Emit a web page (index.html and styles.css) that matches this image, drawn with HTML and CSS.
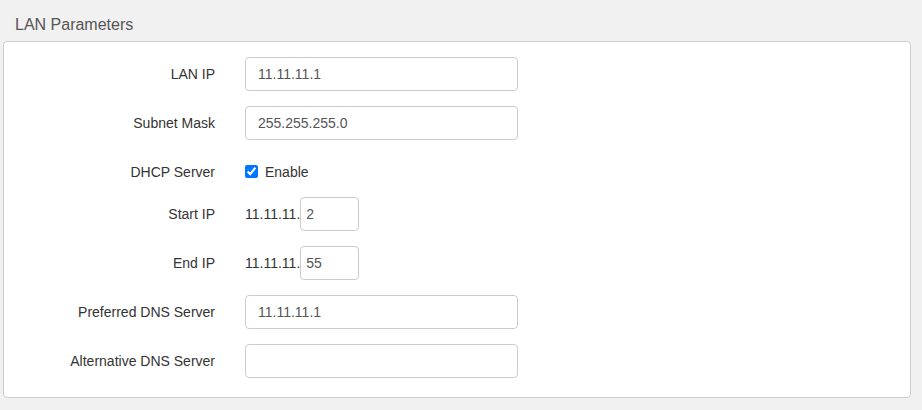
FILE: index.html
```html
<!DOCTYPE html>
<html lang="en">
<head>
    <meta charset="UTF-8">
    <meta name="viewport" content="width=device-width, initial-scale=1.0">
    <title>LAN Parameters</title>
    <link rel="stylesheet" href="styles.css">
</head>
<body>
    <div class="page">
        <div class="panel-title">LAN Parameters</div>
        <div class="panel">
            <div class="form-row">
                <label class="form-label" for="lan-ip">LAN IP</label>
                <div class="form-field">
                    <input type="text" id="lan-ip" class="text-input" value="11.11.11.1">
                </div>
            </div>
            <div class="form-row">
                <label class="form-label" for="subnet-mask">Subnet Mask</label>
                <div class="form-field">
                    <input type="text" id="subnet-mask" class="text-input" value="255.255.255.0">
                </div>
            </div>
            <div class="form-row">
                <label class="form-label" for="dhcp">DHCP Server</label>
                <div class="form-field check-field">
                    <input type="checkbox" id="dhcp" checked>
                    <span class="check-text">Enable</span>
                </div>
            </div>
            <div class="form-row">
                <label class="form-label" for="start-ip">Start IP</label>
                <div class="form-field ip-field">
                    <span class="ip-prefix">11.11.11.</span>
                    <input type="text" id="start-ip" class="text-input short-input" value="2">
                </div>
            </div>
            <div class="form-row">
                <label class="form-label" for="end-ip">End IP</label>
                <div class="form-field ip-field">
                    <span class="ip-prefix">11.11.11.</span>
                    <input type="text" id="end-ip" class="text-input short-input" value="55">
                </div>
            </div>
            <div class="form-row">
                <label class="form-label" for="dns1">Preferred DNS Server</label>
                <div class="form-field">
                    <input type="text" id="dns1" class="text-input" value="11.11.11.1">
                </div>
            </div>
            <div class="form-row">
                <label class="form-label" for="dns2">Alternative DNS Server</label>
                <div class="form-field">
                    <input type="text" id="dns2" class="text-input" value="">
                </div>
            </div>
        </div>
    </div>
</body>
</html>
```

FILE: styles.css
```css
body {
    font-family: "Liberation Sans", Arial, sans-serif;
    font-size: 14px;
    color: #333;
    background-color: #f1f1f1;
    margin: 0;
}
.page {
    padding: 0 11px 12px 3px;
}
.panel-title {
    font-size: 16px;
    line-height: 20px;
    color: #555;
    padding: 15px 0 0 12px;
    margin-bottom: 6px;
}
.panel {
    background-color: #fff;
    border: 1px solid #ccc;
    border-radius: 4px;
    padding: 15px 0 4px 0;
}
.form-row {
    display: flex;
    margin-bottom: 15px;
}
.form-label {
    box-sizing: border-box;
    width: 226px;
    padding: 7px 15px 0 0;
    line-height: 20px;
    text-align: right;
}
.form-field {
    padding-left: 15px;
}
.text-input {
    box-sizing: border-box;
    width: 273px;
    height: 34px;
    padding: 6px 12px;
    border: 1px solid #ccc;
    border-radius: 4px;
    font-family: inherit;
    font-size: 14px;
    color: #555;
    background-color: #fff;
    outline: none;
}
.check-field {
    display: flex;
    align-items: center;
    padding-top: 7px;
    height: 20px;
}
.check-field input {
    width: 13px;
    height: 13px;
    margin: -2px 0 0 0;
}
.check-text {
    margin-left: 7px;
    line-height: 20px;
}
.ip-field {
    display: flex;
    align-items: center;
}
.short-input {
    width: 59px;
    padding: 6px 5px;
}
```
